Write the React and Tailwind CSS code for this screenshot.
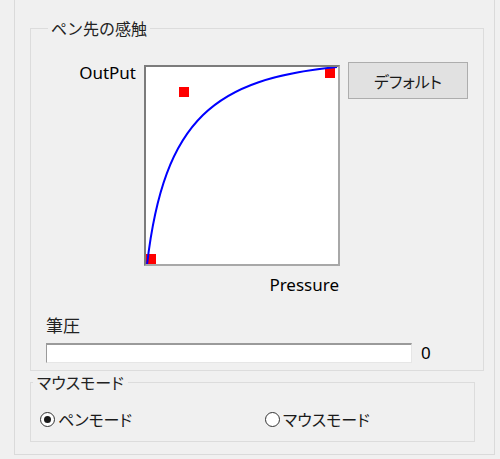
import React from "react";

const jp = "font-['Noto_Sans_CJK_JP',sans-serif]";
const jpNarrow = "font-['Noto_Sans_CJK_JP',sans-serif] [font-feature-settings:'palt']";
const latin = "font-['Noto_Sans','Noto_Sans_CJK_JP',sans-serif]";

function PressureCurve() {
  return (
    <svg width="192" height="197" viewBox="0 0 192 197" className="block">
      <rect x="0" y="187" width="10" height="10" fill="#ff0000" />
      <rect x="179" y="1" width="10" height="10" fill="#ff0000" />
      <rect x="33" y="20" width="10" height="10" fill="#ff0000" />
      <path d="M1 198 C18 50 70 12 191 0" fill="none" stroke="#0000ff" strokeWidth="2" />
    </svg>
  );
}

function Radio({ checked, label }) {
  return (
    <label className="flex items-center gap-[3px] h-[20px]">
      <span className="w-[15px] h-[15px] rounded-full border border-[#333333] bg-white flex items-center justify-center">
        {checked && <span className="w-[7px] h-[7px] rounded-full bg-[#1a1a1a]" />}
      </span>
      <span className={`${jpNarrow} text-[16px] leading-[18px] text-[#1a1a1a]`}>{label}</span>
    </label>
  );
}

export default function App() {
  return (
    <div className="w-[500px] h-[459px] bg-[#f0f0f0] overflow-hidden">
      <div className="ml-[14px] w-[481px] h-[455px] border-x border-b border-[#dadada] px-[15px] pt-[19px]">
        <fieldset className="w-[448px] border border-[#dcdcdc] px-[15px] pb-[7px]">
          <legend className={`${jp} ml-[2px] px-[3px] text-[16px] leading-[18px] text-[#222222]`}>
            ペン先の感触
          </legend>

          <div className="flex items-start pt-[26px]">
            <div className={`${latin} w-[90px] text-right text-[17px] leading-[20px] text-black`}>OutPut</div>
            <div className="ml-[8px] mt-[2px] w-[196px] h-[201px] bg-white border-2 border-t-[#7c7c7c] border-l-[#7c7c7c] border-r-[#a8a8a8] border-b-[#a8a8a8]">
              <PressureCurve />
            </div>
            <button className={`${jpNarrow} ml-[8px] -mt-[1px] w-[120px] h-[37px] bg-[#e1e1e1] border border-[#adadad] text-[16px] text-[#1a1a1a]`}>
              デフォルト
            </button>
          </div>

          <div className={`${latin} w-[294px] mt-[9px] pr-[1px] text-right text-[17px] leading-[20px] text-black`}>
            Pressure
          </div>

          <div className={`${jp} mt-[20px] text-[17px] leading-[20px] text-[#222222]`}>筆圧</div>

          <div className="flex items-center mt-[8px]">
            <div className="w-[366px] h-[20px] bg-white border-t-2 border-l border-r border-b border-t-[#9a9a9a] border-l-[#9a9a9a] border-r-[#e6e6e6] border-b-[#e6e6e6]" />
            <span className={`${latin} ml-[9px] text-[17px] leading-[20px] text-black`}>0</span>
          </div>
        </fieldset>

        <fieldset className="mt-[2px] w-[445px] border border-[#dcdcdc] pl-[9px] pt-[18px] pb-[12px]">
          <legend className={`${jpNarrow} ml-[-7px] px-[4px] text-[16px] leading-[18px] text-[#222222]`}>
            マウスモード
          </legend>
          <div className="flex">
            <div className="w-[225px]">
              <Radio checked label="ペンモード" />
            </div>
            <Radio label="マウスモード" />
          </div>
        </fieldset>
      </div>
    </div>
  );
}
